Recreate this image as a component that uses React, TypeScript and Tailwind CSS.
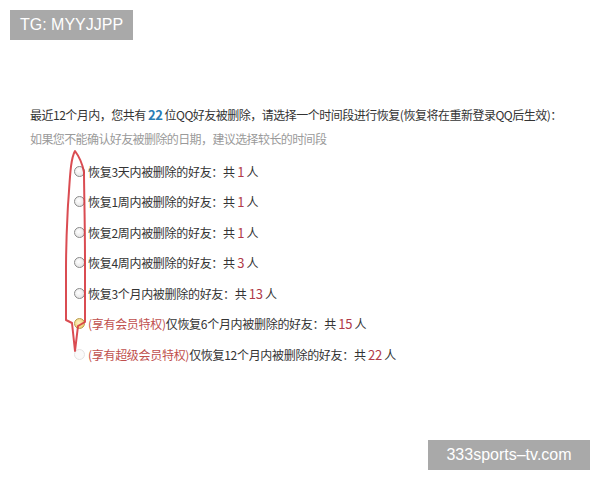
import React from "react"

interface Option {
  prefix?: string
  label: string
  count: number
  state?: "normal" | "checked" | "disabled"
}

const options: Option[] = [
  { label: "恢复3天内被删除的好友：共", count: 1 },
  { label: "恢复1周内被删除的好友：共", count: 1 },
  { label: "恢复2周内被删除的好友：共", count: 1 },
  { label: "恢复4周内被删除的好友：共", count: 3 },
  { label: "恢复3个月内被删除的好友：共", count: 13 },
  { prefix: "(享有会员特权)", label: "仅恢复6个月内被删除的好友：共", count: 15, state: "checked" },
  { prefix: "(享有超级会员特权)", label: "仅恢复12个月内被删除的好友：共", count: 22, state: "disabled" },
]

function Radio({ state = "normal" }: { state?: Option["state"] }) {
  if (state === "checked") {
    return (
      <span className="w-[11px] h-[11px] rounded-full border border-[#b89a4a] bg-[radial-gradient(circle_at_40%_40%,#fff3c0,#e6c35c)] shrink-0" />
    )
  }
  if (state === "disabled") {
    return <span className="w-[11px] h-[11px] rounded-full border border-[#e4e4e4] bg-[#fafafa] shrink-0" />
  }
  return (
    <span className="w-[11px] h-[11px] rounded-full border border-[#8a8a8a] bg-[radial-gradient(circle_at_40%_40%,#ffffff,#dcdcdc)] shrink-0" />
  )
}

export default function App() {
  return (
    <div
      className="relative w-[600px] h-[480px] bg-white overflow-hidden text-[#333] text-[12px]"
      style={{ fontFamily: '"Noto Sans CJK SC", "Liberation Sans", sans-serif' }}
    >
      {/* watermarks */}
      <div className="absolute left-[10px] top-[10px] h-[30px] px-[10px] flex items-center bg-[#a9a9a9] text-white text-[16px]" style={{ fontFamily: '"Liberation Sans", sans-serif' }}>
        TG: MYYJJPP
      </div>
      <div className="absolute left-[428px] top-[440px] h-[30px] w-[162px] flex items-center justify-center bg-[#a9a9a9] text-white text-[16px]" style={{ fontFamily: '"Liberation Sans", sans-serif' }}>
        333sports–tv.com
      </div>

      <div className="flex flex-col pt-[105px] pl-[30px]">
        <p className="leading-[20px] tracking-[-0.5px]">
          最近12个月内，您共有 <span className="font-bold text-[#2a7cb5] text-[13px]">22</span> 位QQ好友被删除，请选择一个时间段进行恢复(恢复将在重新登录QQ后生效)：
        </p>
        <p className="leading-[20px] mt-[4px] text-[#9a9a9a] tracking-[-0.6px]">
          如果您不能确认好友被删除的日期，建议选择较长的时间段
        </p>

        <div className="flex flex-col mt-[7px] pl-[44px]">
          {options.map((o, i) => (
            <div key={i} className="flex items-center gap-[3px] h-[30.5px]">
              <Radio state={o.state} />
              <span className="tracking-[-0.3px]">
                {o.prefix && <span className="text-[#c0504d]">{o.prefix}</span>}
                {o.label} <span className="text-[#b03a48] text-[13px]">{o.count}</span> 人
              </span>
            </div>
          ))}
        </div>
      </div>

      {/* red hand-drawn mark */}
      <svg className="absolute left-0 top-0 pointer-events-none" width="600" height="480">
        <path
          d="M75,151 C70,160 70,180 68,205 C67,225 66,240 66,270 L66,320 L72,323 L75,351 L78,326 L85,322 L85,260 C85,220 84,190 84,172 C82,162 78,155 75,151 Z"
          fill="none"
          stroke="#d6383f"
          strokeWidth="2"
          strokeLinejoin="round"
          opacity="0.9"
        />
      </svg>
    </div>
  )
}
